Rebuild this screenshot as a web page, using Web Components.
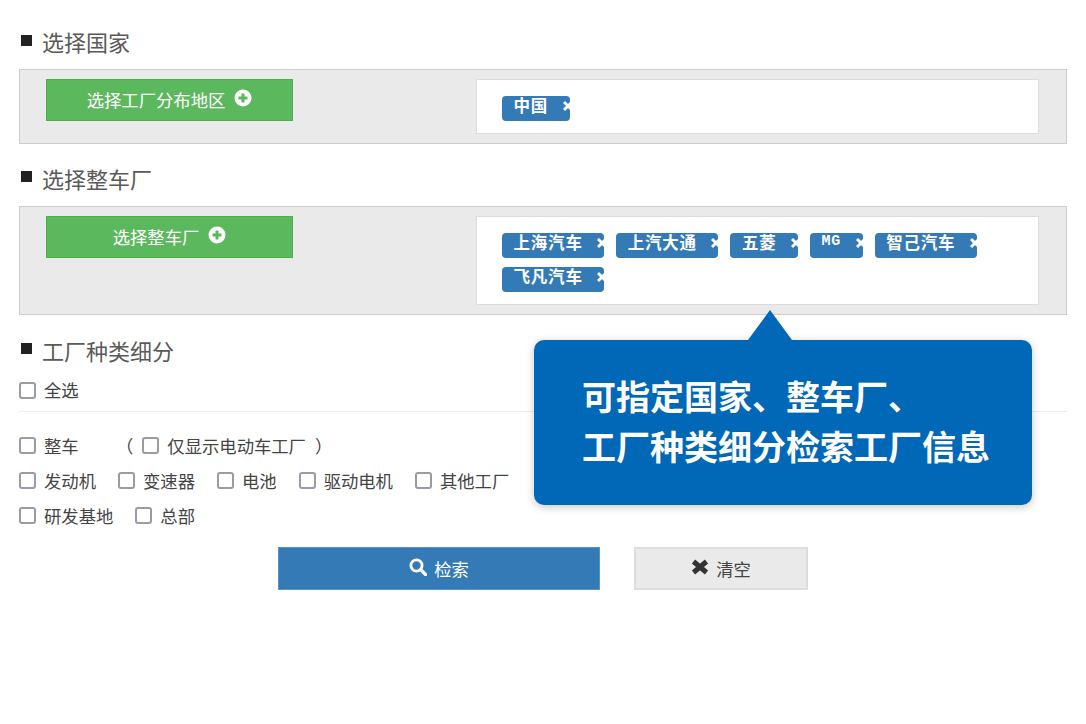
<!DOCTYPE html>
<html lang="zh">
<head>
<meta charset="utf-8">
<title>工厂检索</title>
<style>
  html, body { margin: 0; padding: 0; background: #fff; }
  body { font-family: "Noto Sans CJK SC", "Liberation Sans", sans-serif; font-size: 17.33px; color: #444; }
</style>
</head>
<body>
<x-search-page>
  <x-section-title>选择国家</x-section-title>
  <x-picker-panel>
    <x-add-button slot="action">选择工厂分布地区</x-add-button>
    <x-tag>中国</x-tag>
  </x-picker-panel>

  <x-section-title style="margin-top:23.4px">选择整车厂</x-section-title>
  <x-picker-panel>
    <x-add-button slot="action">选择整车厂</x-add-button>
    <x-tag>上海汽车</x-tag>
    <x-tag>上汽大通</x-tag>
    <x-tag>五菱</x-tag>
    <x-tag style="--tag-font:'Liberation Mono',monospace;--tag-size:15px">MG</x-tag>
    <x-tag>智己汽车</x-tag>
    <x-tag>飞凡汽车</x-tag>
  </x-picker-panel>

  <x-section-title style="margin-top:24px;margin-bottom:15px">工厂种类细分</x-section-title>
  <x-check-row divider><x-check>全选</x-check></x-check-row>
  <x-check-row style="margin-top:20.5px">
    <x-check style="width:82px">整车</x-check>
    <span style="margin:0 9px 0 15px">（</span>
    <x-check>仅显示电动车工厂</x-check>
    <span style="margin-left:9px">）</span>
  </x-check-row>
  <x-check-row gap>
    <x-check>发动机</x-check><x-check>变速器</x-check><x-check>电池</x-check><x-check>驱动电机</x-check><x-check>其他工厂</x-check>
  </x-check-row>
  <x-check-row gap>
    <x-check>研发基地</x-check><x-check>总部</x-check>
  </x-check-row>

  <x-action-bar>
    <x-action-button kind="primary">检索</x-action-button>
    <x-action-button kind="clear">清空</x-action-button>
  </x-action-bar>

  <x-callout slot="overlay">可指定国家、整车厂、<br>工厂种类细分检索工厂信息</x-callout>
</x-search-page>

<script>
class XSearchPage extends HTMLElement {
  constructor() {
    super();
    this.attachShadow({ mode: "open" }).innerHTML = `
      <style>
        :host { display: block; position: relative; width: 1086px; height: 724px; overflow: hidden; }
        .content { padding: 30px 19px 0; box-sizing: border-box; }
      </style>
      <div class="content"><slot></slot></div>
      <slot name="overlay"></slot>`;
  }
}

class XSectionTitle extends HTMLElement {
  constructor() {
    super();
    this.attachShadow({ mode: "open" }).innerHTML = `
      <style>
        :host { display: flex; align-items: center; height: 26px; margin-bottom: 13px; font-size: 22px; color: #5a5a5a; }
        i { width: 11px; height: 11px; margin: -6px 10px 0 2px; background: #222; }
        span { margin-top: -4px; }
      </style>
      <i></i><span><slot></slot></span>`;
  }
}

class XPickerPanel extends HTMLElement {
  constructor() {
    super();
    this.attachShadow({ mode: "open" }).innerHTML = `
      <style>
        :host { display: flex; align-items: flex-start; justify-content: space-between; padding: 9px 27px 9px 26px; background: #eaeaea; border: 1px solid #ccc; }
        .tags { box-sizing: border-box; width: 563px; display: flex; flex-wrap: wrap; gap: 9.6px 12px; padding: 16px 25px 12px; background: #fff; border: 1px solid #ddd; }
      </style>
      <slot name="action"></slot>
      <div class="tags"><slot></slot></div>`;
  }
}

class XAddButton extends HTMLElement {
  constructor() {
    super();
    this.attachShadow({ mode: "open" }).innerHTML = `
      <style>
        :host { box-sizing: border-box; display: flex; align-items: center; justify-content: center; width: 247px; height: 42px; background: #5cb85c; border: 1px solid #4cae4c; color: #fff; }
        .inner { display: flex; align-items: center; gap: 9px; margin-top: -1px; }
        svg { width: 18px; height: 18px; margin-top: -3px; }
      </style>
      <div class="inner"><slot></slot>
      <svg viewBox="0 0 18 18"><path fill="#fff" fill-rule="evenodd" d="M9 .5a8.5 8.5 0 1 1 0 17a8.5 8.5 0 0 1 0-17zM7.5 4.5v3h-3v3h3v3h3v-3h3v-3h-3v-3z"/></svg></div>`;
  }
}

class XTag extends HTMLElement {
  constructor() {
    super();
    this.attachShadow({ mode: "open" }).innerHTML = `
      <style>
        :host { box-sizing: border-box; position: relative; display: flex; align-items: center; height: 24.6px; padding: 0 21.5px 0 11.5px; background: #337ab7; border-radius: 4px; color: #fff; letter-spacing: .8px; font: 700 var(--tag-size, 16.5px)/1 var(--tag-font, "Noto Sans CJK SC"), "Noto Sans CJK SC", sans-serif; }
        span { margin-top: -7px; }
        svg { position: absolute; right: -3px; top: 4px; width: 10px; height: 12px; }
      </style>
      <span><slot></slot></span>
      <svg viewBox="0 0 10 12"><path fill="none" stroke="#fff" stroke-width="3" d="M1 2l8 8M9 2l-8 8"/></svg>`;
  }
}

class XCheck extends HTMLElement {
  constructor() {
    super();
    this.attachShadow({ mode: "open" }).innerHTML = `
      <style>
        :host { display: inline-flex; align-items: center; color: #444; white-space: nowrap; }
        i { box-sizing: border-box; width: 17px; height: 17px; margin: 1px 8px 0 0; border: 2px solid #9a9aa8; border-radius: 3px; background: #fff; }
      </style>
      <i></i><slot></slot>`;
  }
}

class XCheckRow extends HTMLElement {
  constructor() {
    super();
    this.attachShadow({ mode: "open" }).innerHTML = `
      <style>
        :host { display: flex; align-items: center; height: 26px; }
        :host([divider]) { height: 20px; padding-bottom: 11px; border-bottom: 1px solid #eee; }
        :host([gap]) { margin-top: 9px; gap: 22px; }
      </style>
      <slot></slot>`;
  }
}

class XActionBar extends HTMLElement {
  constructor() {
    super();
    this.attachShadow({ mode: "open" }).innerHTML = `
      <style>:host { display: flex; justify-content: center; gap: 34px; margin-top: 18.5px; }</style>
      <slot></slot>`;
  }
}

class XActionButton extends HTMLElement {
  constructor() {
    super();
    const icons = {
      primary: `<svg viewBox="0 0 18 18"><circle cx="7.5" cy="7.5" r="5.6" fill="none" stroke="#fff" stroke-width="2.8"/><path d="M11.5 11.5l5 5" stroke="#fff" stroke-width="3.2" stroke-linecap="round"/></svg>`,
      clear: `<svg viewBox="0 0 18 18"><path d="M2.5 3.5l13 11M15.5 3.5l-13 11" stroke="#333" stroke-width="5"/></svg>`,
    };
    const kind = this.getAttribute("kind");
    this.attachShadow({ mode: "open" }).innerHTML = `
      <style>
        :host { box-sizing: border-box; display: flex; align-items: center; justify-content: center; gap: 7px; height: 43px; }
        :host([kind="primary"]) { width: 322px; background: #337ab7; border: 1px solid #5b93c4; color: #fff; }
        :host([kind="clear"]) { width: 174px; background: #eaeaea; border: 2px solid #ddd; color: #444; }
        svg { width: 18px; height: 18px; margin-top: -3px; }
      </style>
      ${icons[kind]}<slot></slot>`;
  }
}

class XCallout extends HTMLElement {
  constructor() {
    super();
    this.attachShadow({ mode: "open" }).innerHTML = `
      <style>
        :host { box-sizing: border-box; position: absolute; left: 534px; top: 340px; width: 498px; height: 165px; padding: 31px 0 0 48px; background: #0068b7; border-radius: 10px; box-shadow: 0 2px 8px rgba(0,0,0,.22); color: #fff; font-size: 34px; font-weight: 700; line-height: 50px; white-space: nowrap; }
        i { position: absolute; left: 214px; top: -30px; width: 0; height: 0; border-style: solid; border-width: 0 22px 30px; border-color: transparent transparent #0068b7; }
      </style>
      <i></i><slot></slot>`;
  }
}

customElements.define("x-search-page", XSearchPage);
customElements.define("x-section-title", XSectionTitle);
customElements.define("x-picker-panel", XPickerPanel);
customElements.define("x-add-button", XAddButton);
customElements.define("x-tag", XTag);
customElements.define("x-check", XCheck);
customElements.define("x-check-row", XCheckRow);
customElements.define("x-action-bar", XActionBar);
customElements.define("x-action-button", XActionButton);
customElements.define("x-callout", XCallout);
</script>
</body>
</html>
